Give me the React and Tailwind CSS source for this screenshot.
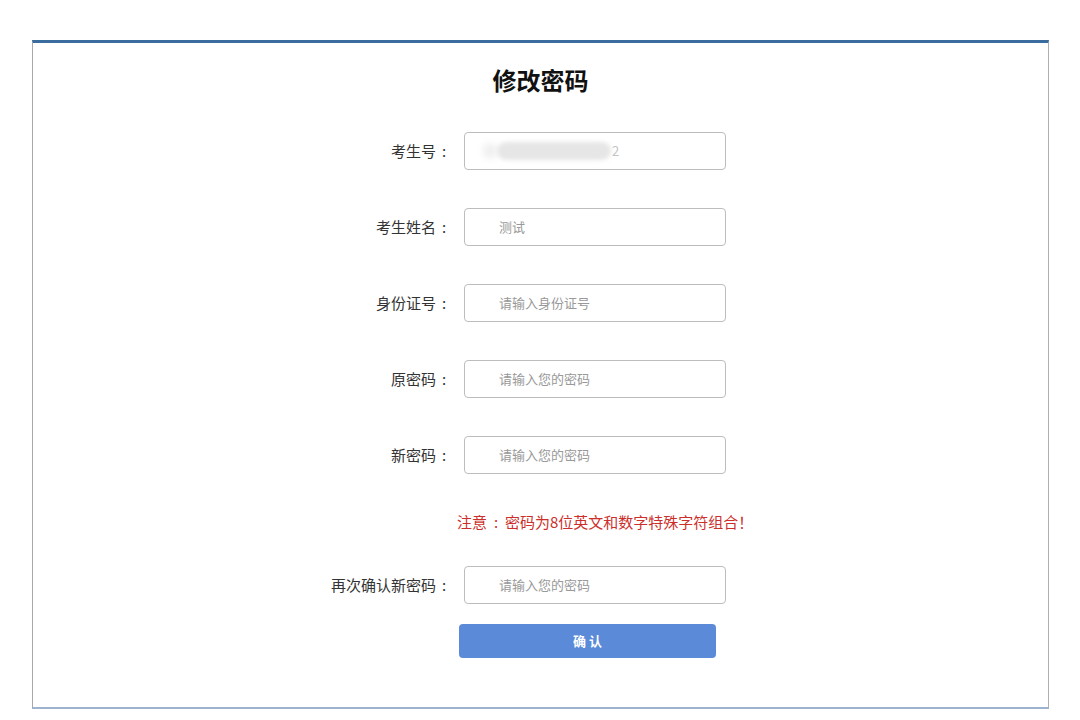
const fontCJK = { fontFamily: '"Noto Sans CJK SC", "Noto Sans", sans-serif' };

const rows = [
  { label: "考生号", value: "blur" },
  { label: "考生姓名", placeholder: "测试" },
  { label: "身份证号", placeholder: "请输入身份证号" },
  { label: "原密码", placeholder: "请输入您的密码" },
  { label: "新密码", placeholder: "请输入您的密码" },
];

function Field({ label, placeholder, value }) {
  return (
    <div className="flex items-center">
      <div className="flex w-[152px] items-center justify-end pr-[12px] text-[15px] text-[#333]">
        <span>{label}</span>
        <span className="w-[16px] text-center">:</span>
      </div>
      <div className="flex h-[38px] w-[262px] items-center rounded-[4px] border border-[#bdbdbd] bg-white pl-[34px] text-[13px] text-[#999]">
        {value === "blur" ? (
          <div className="flex items-center">
            <span className="-ml-[16px] h-[16px] w-[14px] rounded-full bg-[#f0f0f0] blur-[3px]" />
            <span className="h-[18px] w-[114px] rounded-full bg-[#e6e6e6] blur-[2px]" />
            <span className="ml-[1px] text-[#c4c4c4]">2</span>
          </div>
        ) : (
          placeholder
        )}
      </div>
    </div>
  );
}

export default function App() {
  return (
    <div className="h-[720px] w-[1080px] overflow-hidden bg-white pt-[40px] pl-[32px]" style={fontCJK}>
      <div className="h-[669px] w-[1017px] border-t-[3px] border-r border-b-2 border-l border-t-[#3a6d9e] border-r-[#b0b0b0] border-b-[#9db3cf] border-l-[#a8a8a8] bg-white">
        <h1 className="mt-[21px] text-center text-[24px] leading-[32px] font-bold text-[#111]">修改密码</h1>

        <div className="mt-[36px] flex flex-col gap-[38px] pl-[279px]">
          {rows.map((r) => (
            <Field key={r.label} {...r} />
          ))}
        </div>

        <p className="mt-[38px] flex pl-[424px] text-[15px] leading-[20px] text-[#cc2f2b]">
          <span>注意</span>
          <span className="w-[18px] text-center">:</span>
          <span>密码为8位英文和数字特殊字符组合！</span>
        </p>

        <div className="mt-[34px] pl-[279px]">
          <Field label="再次确认新密码" placeholder="请输入您的密码" />
        </div>

        <div className="mt-[20px] pl-[426px]">
          <button className="h-[34px] w-[257px] rounded-[4px] bg-[#5a8ad8] text-[13px] font-bold text-white">
            确 认
          </button>
        </div>
      </div>
    </div>
  );
}
